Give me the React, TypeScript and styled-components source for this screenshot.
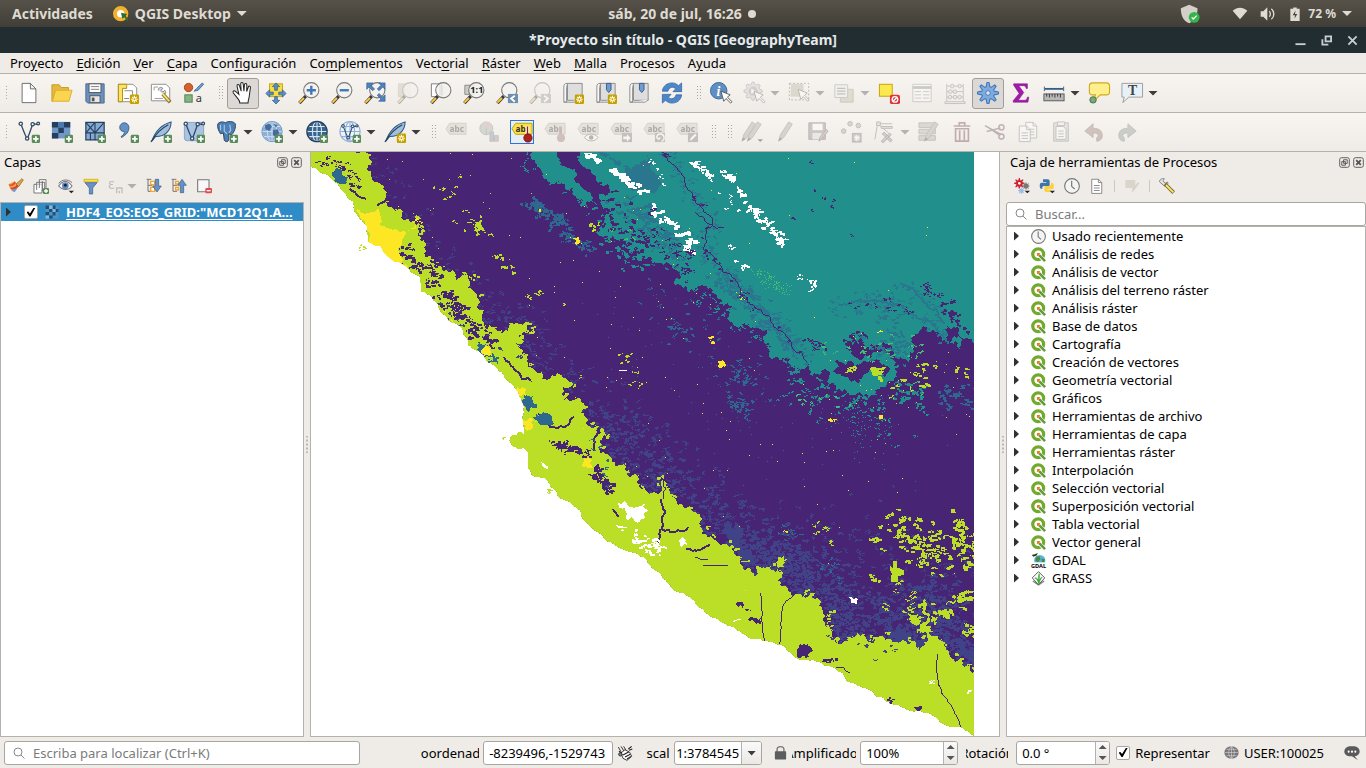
import React from "react";
import styled, { createGlobalStyle, css } from "styled-components";

const FONT = '"Noto Sans", "Open Sans", sans-serif';

const GlobalStyle = createGlobalStyle`
  * { box-sizing: border-box; }
  body { margin: 0; font-family: ${FONT}; font-size: 13px; line-height: 18px; color: #000; background: #efebe7; }
  button, input, select { font: inherit; color: inherit; margin: 0; }
  button { border: 0; padding: 0; background: none; }
  ul { list-style: none; margin: 0; padding: 0; }
`;

/* ---------- map drawing ---------- */

type Pt = [number, number];

const random = (seed: number) => () => {
  seed = (seed + 0x6d2b79f5) | 0;
  let t = Math.imul(seed ^ (seed >>> 15), 1 | seed);
  t = (t + Math.imul(t ^ (t >>> 7), 61 | t)) ^ t;
  return ((t ^ (t >>> 14)) >>> 0) / 4294967296;
};

const parse = (s: string): Pt[] => s.trim().split(/\s+/).map((p) => p.split(",").map(Number) as Pt);

/* Fractal line: every segment is split at a displaced midpoint until it is short. */
function rough(points: Pt[], amp: number, seed: number): Pt[] {
  const r = random(seed);
  const out: Pt[] = [];
  const split = (a: Pt, b: Pt) => {
    const dx = b[0] - a[0];
    const dy = b[1] - a[1];
    if (Math.hypot(dx, dy) < 3) {
      out.push([Math.round(b[0]), Math.round(b[1])]);
      return;
    }
    const k = (r() - 0.5) * amp;
    const m: Pt = [a[0] + dx / 2 - dy * k, a[1] + dy / 2 + dx * k];
    split(a, m);
    split(m, b);
  };
  out.push(points[0]);
  for (let i = 1; i < points.length; i++) split(points[i - 1], points[i]);
  return out;
}

const polygon = (pts: Pt[]) => "M" + pts.map((p) => p.join(" ")).join("L") + "Z";
const blob = (s: string, amp: number, seed: number) => {
  const p = parse(s);
  return polygon(rough([...p, p[0]], amp, seed));
};
const line = (s: string, seed: number, amp = 0.35) => "M" + rough(parse(s), amp, seed).map((p) => p.join(" ")).join("L");

/* Cells strewn around a polyline; cells larger than one pixel come in short wandering chains. */
function strew(s: string | Pt[], spread: number, count: number, size: number, seed: number): string {
  const pts = typeof s === "string" ? parse(s) : s;
  const r = random(seed);
  const chain = size > 1 ? 5 : 1;
  let d = "";
  const lengths = pts.slice(1).map((p, i) => Math.hypot(p[0] - pts[i][0], p[1] - pts[i][1]));
  const total = lengths.reduce((a, b) => a + b, 0);
  for (let n = 0; n < count; n += chain) {
    let t = r() * total;
    let i = 0;
    while (i < lengths.length - 1 && t > lengths[i]) t -= lengths[i++];
    const f = t / (lengths[i] || 1);
    const g = () => (r() + r() + r() - 1.5) * spread * 1.3;
    let x = Math.round(pts[i][0] + (pts[i + 1][0] - pts[i][0]) * f + g());
    let y = Math.round(pts[i][1] + (pts[i + 1][1] - pts[i][1]) * f + g());
    for (let c = 0; c < chain; c++) {
      const w = 1 + Math.floor(r() * size);
      const h = 1 + Math.floor(r() * Math.max(1, size - 1));
      d += `M${x} ${y}h${w}v${h}h-${w}z`;
      x += Math.round((r() - 0.45) * 4);
      y += Math.round((r() - 0.45) * 3);
    }
  }
  return d;
}

const coast = rough(
  parse(`311,168 325,175 333,182 342,192 353,203 357,217 367,228 368,243 380,247 387,257 405,267 420,278 421,293
  438,305 445,317 462,330 468,347 487,363 505,380 518,393 524,413 524,434 511,437 512,447 522,447 528,457 532,477 538,478 548,483
  557,493 558,498 580,512 590,528 603,538 627,552 643,558 650,567 660,575 670,586 687,597 698,608 713,619 740,632
  767,642 785,648 798,660 817,663 843,675 847,683 877,698 890,705 920,712 935,718 940,724 960,728 972,736`),
  0.25,
  3,
);
const inner = rough(
  parse(`350,153 372,163 371,178 380,185 387,193 393,210 405,222 420,225 426,243 432,263 448,273 467,275 465,290 477,297 482,317
  493,330 508,332 530,325 518,337 520,350 528,360 545,380 572,383 563,397 585,407 588,427 610,435 600,441 605,455 627,473 658,495
  663,475 670,493 683,508 700,523 713,540 737,557 740,565 775,573 783,557 778,582 810,595 823,620 848,642 857,633 867,643 880,637
  920,652 928,642 902,613 923,623 924,600 930,620 942,640 950,657 974,673`),
  0.75,
  8,
);
const landPath = polygon([...coast, [974, 737], [974, 153], [311, 153]]);
const greenPath = polygon([...coast, [974, 737], ...[...inner].reverse(), [311, 153]]);
const shifted = (dx: number, dy: number) => inner.map((p) => [p[0] + dx, p[1] + dy] as Pt);
const lowerInner = inner.filter((p) => p[0] > 590).map((p) => [p[0] + 10, p[1] - 14] as Pt);

const tealLobe = "532,153 537,165 542,173 547,180 560,183 582,200 588,212 589,193 580,185 575,173 566,168 560,160 557,153";
const tealEdge = `580,153 598,177 605,197 602,213 612,237 625,250 638,262 656,264 680,273 688,293 700,287 718,300 732,307
730,323 767,332 763,343 790,360 813,377 840,390 860,393 887,383 897,378 893,360 873,353 853,357 838,353 850,347 887,345 920,360
914,345 923,327 940,340 960,350 947,326 960,338 974,347`;
const river = "662,153 676,168 684,178 690,192 703,212 713,222 706,232 703,250 714,260 723,273 740,293 757,310 770,318 783,333 793,350 807,363";

const purple = "#482475";
const indigo = "#404387";
const blue = "#2f688e";
const slate = "#2a768e";
const teal = "#21908d";
const lime = "#bbdf27";
const yellow = "#fde725";
const mint = "#43bf71";

type Layer = { fill?: string; stroke?: string; width?: number; d: string };
const layers: Layer[] = [
  { fill: purple, d: landPath },
  { fill: indigo, d: strew(shifted(8, -4), 14, 1500, 2, 11) },
  { fill: indigo, d: strew(lowerInner, 26, 3400, 3, 12) },
  { fill: indigo, d: strew("730,545 760,560 800,590 850,625 890,625 935,645 974,660", 28, 2800, 3, 13) },
  { fill: indigo, d: strew("800,530 850,550 900,590 965,590", 42, 900, 2, 14) },
  { fill: indigo, d: strew("480,300 530,345 600,410 660,460 730,520", 22, 1100, 2, 15) },
  { fill: indigo, d: blob("722,522 742,530 752,552 762,566 745,563 725,548", 0.9, 16) },
  { fill: indigo, d: blob("880,625 905,633 926,642 920,651 892,640", 0.9, 17) },
  { fill: indigo, d: blob("944,637 965,648 974,655 974,673 958,660", 0.9, 18) },
  { fill: blue, d: strew("528,202 543,212 560,225 573,240 588,252", 6, 420, 3, 20) },
  { fill: blue, d: strew("672,325 688,335", 7, 90, 2, 21) + strew("735,370 752,382", 7, 110, 2, 22) + strew("735,400 745,412", 8, 140, 2, 23) },
  { fill: blue, d: strew("645,285 690,315 740,360 760,420", 26, 240, 2, 24) + strew("945,385 965,400", 12, 200, 3, 25) },
  { fill: blue, d: strew("630,310 700,400 900,410", 60, 140, 1, 26) + strew("785,530 792,542", 6, 50, 2, 27) + strew("825,563 840,577", 7, 50, 2, 28) },
  { fill: teal, d: blob(tealLobe, 0.8, 30) },
  { fill: teal, d: polygon([...rough(parse(tealEdge), 0.9, 31), [974, 153]]) },
  { fill: teal, d: strew("525,153 545,175 590,205", 8, 150, 2, 32) + strew("605,200 615,235 635,265", 12, 420, 3, 33) },
  { fill: teal, d: strew("780,350 830,390 870,395 930,395", 11, 420, 3, 34) + strew("780,400 850,405 880,420 895,435", 14, 260, 2, 35) },
  { fill: teal, d: strew("845,415 880,430 860,447", 18, 90, 1, 36) + strew("690,290 760,340 800,370", 7, 240, 2, 37) },
  { fill: purple, d: strew("606,200 618,225 634,240 650,247", 13, 330, 3, 40) + strew("650,235 668,250 688,270", 8, 240, 2, 41) },
  { fill: purple, d: strew("850,340 860,345", 6, 90, 3, 42) + strew("805,342 820,350", 5, 60, 2, 43) + strew("920,285 940,297", 4, 60, 2, 44) + strew("945,305 960,325 970,335", 6, 100, 3, 45) },
  { fill: purple, d: blob("832,372 850,362 870,362 890,370 885,378 858,384", 0.9, 46) + blob("923,345 935,337 950,348 974,352 974,370 900,365", 0.9, 47) },
  { fill: slate, d: blob("598,153 648,153 650,170 658,188 645,190 625,173", 0.8, 48) + strew(river, 8, 900, 2, 49) },
  { fill: slate, d: strew("716,275 760,312 790,345", 8, 650, 3, 50) + strew("830,310 870,300 910,310 945,335", 10, 330, 2, 51) + strew("880,290 905,290 950,315", 6, 110, 2, 52) },
  { fill: slate, d: strew("888,310 895,340 905,350 870,350", 10, 260, 3, 53) + strew("620,205 650,225 680,262", 11, 400, 3, 54) },
  { stroke: slate, width: 2, d: line("838,305 870,302 900,306 930,322 948,345", 55) + line("900,284 922,300 945,325", 56) },
  { stroke: purple, width: 1, d: line(river, 57) + line("695,213 712,226 724,228", 58) },
  { fill: purple, d: strew(river, 2, 120, 2, 59) + strew("785,170 805,200 835,215 850,250", 22, 40, 2, 60) + strew("848,302 880,303 910,310", 6, 60, 2, 61) },
  { fill: mint, d: strew("755,272 770,282 788,293", 5, 90, 1, 62) + strew("615,230 627,236", 5, 20, 2, 63) + strew("815,345 850,357 900,345 925,350", 7, 120, 2, 64) + strew("780,398 820,405 910,395 930,385", 10, 60, 2, 65) },
  { fill: "#fff", d: strew("688,160 703,170 711,177", 2, 70, 3, 70) + strew("714,169 725,174 736,181", 1, 60, 3, 71) + strew("738,190 748,207 762,220 778,238 784,248", 2, 230, 3, 72) },
  { fill: "#fff", d: strew("584,153 596,160", 2, 40, 4, 73) + strew("612,170 630,183 642,192", 3, 110, 4, 74) + strew("650,205 658,216 672,224", 3, 60, 4, 75) + strew("672,230 690,240 690,252", 5, 90, 4, 76) },
  { fill: "#fff", d: strew("729,246 740,250", 1, 10, 3, 77) + strew("736,260 746,265", 3, 16, 3, 78) + strew("812,285 815,285", 4, 20, 3, 79) + strew("710,180 720,195 732,210", 5, 35, 2, 80) + strew("650,158 668,195", 7, 24, 2, 81) + strew("800,258 806,300", 6, 12, 2, 82) },
  { fill: purple, d: strew("686,250 692,254", 3, 30, 2, 83) + strew("649,208 652,214", 3, 20, 2, 84) },
  { fill: lime, d: greenPath },
  { fill: lime, d: strew(inner, 5, 800, 3, 90) },
  { fill: lime, d: strew("432,180 450,190 460,205", 9, 45, 2, 91) + strew("455,222 480,226 485,230", 8, 45, 2, 92) + blob("478,215 482,222 492,233 494,238 484,232", 0.9, 93) + strew("500,252 508,272", 5, 34, 3, 94) + strew("586,220 596,229", 1, 14, 3, 95) },
  { fill: lime, d: strew("530,290 540,305 570,310", 8, 30, 2, 96) + strew("595,350 640,365 635,380", 16, 46, 2, 97) + strew("390,160 520,230", 50, 30, 1, 98) },
  { fill: lime, d: strew("843,372 852,369", 2, 18, 3, 99) + strew("872,368 882,379", 3, 60, 4, 100) + strew("912,366 935,366", 3, 30, 3, 101) + strew("890,388 912,380 925,380", 6, 60, 3, 102) + strew("950,369 968,371", 3, 20, 3, 103) },
  { fill: lime, d: strew("895,530 930,545 974,550", 20, 420, 3, 104) + strew("905,540 935,560", 12, 140, 3, 105) + strew("955,520 974,565", 10, 150, 4, 106) + blob("890,567 893,569 893,562 897,562 897,569 904,572 904,576 898,577 898,583 891,583", 0.2, 107) },
  { fill: lime, d: strew("950,600 974,590", 6, 100, 4, 108) + strew("938,612 950,613", 3, 60, 4, 109) + strew("960,632 974,628", 6, 60, 3, 110) + strew("897,585 912,600 910,612", 8, 60, 2, 111) },
  { fill: lime, d: strew("800,523 835,540", 9, 45, 2, 112) + strew("868,537 878,541", 3, 20, 3, 113) + strew("869,575 876,585", 3, 24, 3, 114) + strew("880,603 886,610", 2, 14, 2, 115) + strew("860,380 974,420", 40, 26, 1, 116) },
  { fill: indigo, d: strew("425,300 455,315 480,340 535,360", 9, 160, 2, 120) + strew("830,635 900,655", 9, 90, 2, 121) },
  { fill: purple, d: strew("320,162 345,170 360,185", 6, 150, 2, 122) + strew("400,250 415,262 432,278 438,293", 7, 240, 3, 123) + strew("443,295 455,312 465,320", 6, 200, 3, 124) + strew("470,325 492,345", 7, 120, 3, 125) },
  { stroke: purple, width: 2, d: line("504,358 516,372 532,382", 126) + line("350,190 358,197 366,200", 127) + line("377,207 386,201 394,204", 128) + line("538,415 550,428 565,428 574,418", 129) },
  { fill: purple, d: strew("553,443 570,448 585,454", 3, 150, 3, 130) + strew("592,470 603,480 608,495", 5, 190, 3, 131) + strew("555,444 568,450", 4, 30, 2, 132) },
  { stroke: purple, width: 2, d: line("593,452 594,440 600,432", 133) + line("613,510 619,518", 134) + line("661,500 663,525 660,531 657,545", 135) + line("662,531 675,533 688,528", 136) + line("686,550 700,551 710,546", 137) },
  { stroke: purple, width: 1, d: line("663,480 663,500", 138) + line("703,566 728,566", 139, 0) + line("760,594 761,620 765,642", 140, 0.15) + line("795,595 784,605 780,625 779,645", 141, 0.15) + line("695,558 708,560", 142) + line("937,655 938,685 950,705 960,728", 143, 0.15) + line("836,668 850,674", 144) },
  { fill: purple, d: blob("797,650 800,645 808,644 813,652 806,660 797,658", 0.8, 145) + blob("736,606 744,606 752,612 743,610", 0.8, 146) + blob("748,621 761,619 761,626", 0.8, 147) + strew("824,660 832,662", 3, 24, 3, 148) + strew("912,708 921,709", 2, 16, 3, 149) + strew("889,700 891,703", 2, 10, 3, 150) },
  { fill: blue, d: blob("335,170 342,172 347,184 338,184", 0.9, 151) + blob("476,347 486,345 489,356 480,358", 0.9, 152) + blob("521,402 533,397 537,408 527,412", 0.8, 153) + blob("536,415 545,414 549,426 540,426", 0.9, 154) + strew("485,361 497,358", 2, 30, 3, 155) + strew("590,440 607,490", 6, 35, 2, 156) },
  { fill: yellow, d: blob("357,210 368,214 379,210 380,226 393,231 406,233 418,222 416,229 402,240 398,251 402,265 408,268 387,258 380,248 368,243 367,228", 0.4, 160) },
  { fill: yellow, d: blob("483,349 491,349 492,357 484,358", 0.9, 161) + blob("517,386 524,389 526,398 519,397", 0.9, 162) + blob("524,421 532,419 533,428 525,430", 0.9, 163) + blob("583,459 592,461 593,469 587,469", 0.8, 164) },
  { fill: yellow, d: blob("572,239 579,238 582,245 576,246", 0.7, 165) + blob("718,362 723,361 725,368 719,369", 0.4, 166) + blob("539,210 541,210 541,213 539,213", 0, 167) + strew("708,340 712,343", 2, 8, 3, 168) + strew("826,420 834,420", 1, 10, 3, 169) + blob("879,416 883,416 883,420 879,420", 0, 170) + strew("876,330 879,334", 1, 5, 2, 171) + strew("783,533 787,537", 1, 5, 2, 172) },
  { fill: yellow, d: strew("311,160 500,200 740,300 974,410", 130, 110, 1, 173) + strew("560,300 640,400 900,500", 80, 60, 1, 174) + strew("415,218 419,228", 2, 14, 2, 175) + strew("444,310 450,320", 2, 10, 2, 176) + strew("736,290 745,305", 3, 8, 1, 177) },
  { fill: "#fff", d: blob("617,503 625,502 630,508 645,505 648,512 643,520 637,524 627,521", 0.7, 180) + strew("632,508 640,518", 5, 50, 3, 191) + strew("632,535 644,548 657,545", 6, 100, 3, 181) + strew("655,540 659,552", 3, 40, 3, 182) + blob("678,542 686,541 687,547 680,547", 0.8, 183) + strew("615,528 622,530", 4, 20, 2, 184) },
  { fill: "#fff", d: blob("848,598 852,598 853,600 858,600 857,605 851,604", 0.4, 185) + blob("541,463 548,467 547,470 542,467", 0.5, 186) + strew("929,678 931,683", 2, 14, 2, 187) + strew("734,618 735,622", 2, 8, 2, 188) + strew("967,692 969,696", 2, 8, 2, 189) + blob("619,371 627,371 627,372 619,372", 0, 190) },
];
const islets = strew("359,243 365,248", 1, 10, 2, 200) + blob("511,437 523,434 525,447 513,448", 0.6, 201) + strew("503,440 504,441", 1, 5, 2, 202) + strew("546,487 550,491", 1, 8, 2, 203);

const MapCanvas = () => (
  <MapSvg viewBox="311 153 688 584" preserveAspectRatio="xMinYMin meet" shapeRendering="crispEdges" role="img" aria-label="Mapa">
    <clipPath id="land">
      <path d={landPath} />
    </clipPath>
    <g clipPath="url(#land)">
      {layers.map((l, i) => (
        <path key={i} d={l.d} fill={l.fill ?? "none"} stroke={l.stroke} strokeWidth={l.width} />
      ))}
    </g>
    <path d={islets} fill={lime} />
  </MapSvg>
);

/* ---------- icons, each drawn on a 24 x 24 grid ---------- */

const Plus = () => (
  <g>
    <rect x="15" y="15" width="9" height="9" rx="1.5" fill="#5a8c5a" />
    <path d="M19.5 16.5v6M16.5 19.5h6" stroke="#fff" strokeWidth="2" />
  </g>
);
const Star = () => (
  <g>
    <rect x="14" y="13.5" width="10" height="10.5" rx="1.5" fill="#c4a000" />
    <path d="M19 15v7.500M15.300 18.800h7.400M16.500 16.300l5 5M21.500 16.300l-5 5" stroke="#fffbe0" strokeWidth="1.300" />
    <circle cx="19" cy="18.800" r="1" fill="#c4a000" />
  </g>
);
const Lens = ({ children, back }: { children?: React.ReactNode; back?: React.ReactNode }) => (
  <g>
    {back}
    <path d="M1.500 23L8.500 15.500" stroke="#3a3a3a" strokeWidth="3.500" />
    <path d="M1.500 22.500L6.500 17.500" stroke="#fcc83c" strokeWidth="2.200" />
    <circle cx="14.500" cy="9" r="8.300" fill="#f2f2ef" fillOpacity=".85" stroke="#777" strokeWidth="1.200" />
    {children}
  </g>
);
const Cursor = ({ x = 12, y = 10 }: { x?: number; y?: number }) => (
  <path transform={`translate(${x} ${y})`} d="M0 0l3 11 2.500-3 5 5 1.500-1.500-5-5 3-2.500z" fill="#fff" stroke="#555" strokeWidth="1" />
);
const Tag = ({ abc = "abc", lit = false }: { abc?: string; lit?: boolean }) => (
  <g>
    <path d="M1 8.500l4-6h18v12H5z" fill={lit ? "#fbe14b" : "#cfc9ae"} stroke={lit ? "#b99c00" : "#999"} />
    <text x="5" y="12" fontSize="9" fontWeight="700" fill="#333">{abc}</text>
  </g>
);
const Page = ({ x = 0, y = 0 }: { x?: number; y?: number }) => (
  <g transform={`translate(${x} ${y})`}>
    <path d="M.5.5h8l4 4v13H.5z" fill="#fff" stroke="#777" />
    <path d="M8.500.5v4h4M3 8h7M3 11h7M3 14h7" fill="none" stroke="#777" />
  </g>
);
const Globe = ({ fill, line: l }: { fill: string; line: string }) => (
  <g fill="none" stroke={l} strokeWidth="1.200">
    <circle cx="12" cy="11.500" r="11" fill={fill} />
    <ellipse cx="12" cy="11.500" rx="5" ry="11" />
    <path d="M12 .5v22M1 11.500h22M3 6h18M3 17h18" />
  </g>
);
const Feather = () => (
  <g>
    <path d="M2 22C5 13 12 4 23 1c0 5-1 8-5 12-3 3-7 4-12 4z" fill="#a3bfdf" stroke="#28557f" strokeWidth="1.100" />
    <path d="M1 23C6 14 12 8 20 4" fill="none" stroke="#234260" strokeWidth="1.300" />
  </g>
);
const VNodes = () => (
  <g fill="#fff" stroke="#2f4a66" strokeWidth="1.400">
    <path d="M3 3c1 2 5 14 7 16 2-3 5-13 6-15.500 2-1 4 1 6-.5" fill="none" />
    <circle cx="3" cy="3" r="1.800" /><circle cx="16" cy="3.500" r="1.800" /><circle cx="22" cy="2.800" r="1.500" /><circle cx="10" cy="19" r="1.800" />
  </g>
);
const Pencil = ({ x = 0 }: { x?: number }) => (
  <g transform={`translate(${x} 0)`}>
    <path d="M3 22l2-7L14 1l4 2.500L8.500 18z" fill="#aaa58f" stroke="#777" />
    <path d="M3 22l1-4 3 1.500z" fill="#444" />
  </g>
);
const gearTeeth = (cx: number, cy: number, r1: number, r2: number, n: number) => {
  let d = "";
  for (let i = 0; i < n * 4; i++) {
    const a = ((i - 0.5) / (n * 4)) * Math.PI * 2;
    const r = i % 4 < 2 ? r2 : r1;
    d += `${i ? "L" : "M"}${cx + Math.sin(a) * r} ${cy - Math.cos(a) * r}`;
  }
  return d + "Z";
};
const Roll = ({ mark, star }: { mark?: boolean; star?: boolean }) => (
  <g>
    <path d="M6 1.500h16V20H6z" fill="#dedede" stroke="#888" />
    <path d="M6 1.500c-3 0-4 1-4 4V22h3V6c0-2 1-2 1-4.500zM2 22h17l3-3" fill="#f7f7f7" stroke="#888" />
    {mark && <path d="M12.500 1.500h5v7l-2.500 3-2.500-3z" fill="#6f9bd0" stroke="#345c88" />}
    {star && <Star />}
  </g>
);

const icons: Record<string, React.ReactNode> = {
  new: <path d="M4.500 1.500h9l6 6v15h-15zM13.500 1.500v6h6" fill="#fff" stroke="#666" />,
  open: <g><path d="M1 3h8l2 3h8v4H5L2 21H1z" fill="#e5b93c" stroke="#c49a1c" /><path d="M5 9h18l-3.500 12H1.500z" fill="#fbd450" stroke="#d9ad2b" /></g>,
  save: <g><path d="M2 2h20v21H4l-2-2z" fill="#6991c0" stroke="#49698f" /><rect x="5.500" y="2" width="13" height="9.500" fill="#fff" stroke="#555" /><path d="M7.500 5h9M7.500 8h9" stroke="#777" /><rect x="6.500" y="15" width="11" height="7.500" fill="#e8e8e8" stroke="#555" /><rect x="8.500" y="17" width="3" height="4" fill="#555" /></g>,
  layoutNew: <g><path d="M1.500 2.500h16l4 4v15h-20z" fill="#fff" stroke="#888" /><path d="M1.500 2.500h9v4.500h-4.500v14.500h-4.500z" fill="#fbe26a" stroke="#b08c00" /><path d="M8 9.500h9V15M13 18H8z" fill="none" stroke="#888" /><Star /></g>,
  layouts: <g><path d="M1.500 2.500h16l4 4v14h-20z" fill="#fff" stroke="#888" /><path d="M4.500 9V5.500H9M5 18h9" fill="none" stroke="#999" /><path d="M9 9c0-3 3-4 5-2l-2 2 2 2 2-2c2 2 1 4-1 5" fill="#d6d9dc" stroke="#777" /><path d="M14 13l8 9" stroke="#8a7437" strokeWidth="4" /><path d="M14 13l7 8" stroke="#fbe26a" strokeWidth="2" /></g>,
  style: <g><circle cx="6" cy="6" r="4.500" fill="#d5612f" stroke="#a53c12" /><rect x="2" y="14" width="8" height="8" fill="#85b585" stroke="#4c7c4c" /><path d="M12 10l3-3 6-6 1.500 1.500-6 6.500z" fill="#6f9bd0" stroke="#446d9c" /><text x="14" y="22" fontSize="12" fill="#333">a</text></g>,
  hand: <path d="M8.500 23c0-3-1.500-4-3-6L1.500 12c-1.300-2 .8-3.300 2.400-1.800L7.500 13.500 5.500 4.500c-.4-2 2-2.500 2.600-.6L10 10 9.500 2c0-2 2.600-2 2.700 0L13 10l.6-7c.2-2 2.600-1.800 2.600.2L16 10.500l1.800-5c.7-1.800 2.700-1 2.300.8L19 14c0 4-1.500 5-1.500 9z" fill="#fff" stroke="#222" strokeWidth="1.100" />,
  panSel: <g><rect x="5" y="2" width="14" height="14" fill="#f9dd3e" stroke="#c4a000" /><path d="M12 1l4 4h-2.500v4h-3V5H8zM12 24l4-4h-2.500v-4h-3v4H8zM1 12.500l4-4V11h4v3H5v2.500zM23 12.500l-4-4V11h-4v3h4v2.500z" fill="#5d8cc4" stroke="#2e5f97" strokeWidth=".8" /></g>,
  zoomIn: <Lens><path d="M14.500 4v10M9.500 9h10" stroke="#3f78b5" strokeWidth="2.600" /></Lens>,
  zoomOut: <Lens><path d="M9.500 9h10" stroke="#3f78b5" strokeWidth="2.600" /></Lens>,
  zoomFull: <Lens><path d="M3 1h7L7.500 3.500l4 4-2 2-4-4L3 8zM23 1h-7l2.500 2.500-4 4 2 2 4-4L23 8zM23 21v-7l-2.500 2.500-4-4-2 2 4 4L16 21z" fill="#4f81bb" stroke="#2e5f97" strokeWidth=".7" /></Lens>,
  zoomSel: <Lens back={<path d="M1.500 2h13v14h-13z" fill="#c9c194" stroke="#aaa" />} />,
  zoomLayer: <Lens back={<path d="M1.500 2h11v14h-11z" fill="#fff" stroke="#777" />}><path d="M10 4v10h4.500V4" fill="#ddd" fillOpacity=".6" /></Lens>,
  zoomNative: <Lens back={<path d="M2 3.500h10v10H2z" fill="#ccc" stroke="#888" />}><text x="8" y="12.500" fontSize="10" fontWeight="700" fill="#222">1:1</text></Lens>,
  zoomLast: <Lens><rect x="13" y="13" width="11" height="10" fill="#6f8fae" /><path d="M20.500 15l-4 3 4 3.500" fill="none" stroke="#fff" strokeWidth="2" /></Lens>,
  zoomNext: <Lens><rect x="13" y="13" width="11" height="10" fill="#999" /><path d="M16.500 15l4 3-4 3.500" fill="none" stroke="#fff" strokeWidth="2" /></Lens>,
  mapNew: <Roll star />,
  markNew: <Roll mark star />,
  marks: <Roll mark />,
  refresh: <path d="M1.500 10C2 4 7 1 12 1c3 0 5 1 7 3l3.500-3v9.500h-9.500l3-3c-3-3-7-2-8.500 2.500zM22.500 14c-.5 6-5.500 9-10.500 9-3 0-5-1-7-3l-3.500 3v-9.500h9.500l-3 3c3 3 7 2 8.500-2.500z" fill="#4d87c7" stroke="#2d62a0" strokeWidth=".8" />,
  info: <g><circle cx="9.500" cy="9.500" r="9" fill="#5f8fc2" stroke="#3a679b" /><text x="7" y="15" fontSize="15" fontWeight="700" fontStyle="italic" fill="#fff" fontFamily="Liberation Serif">i</text><Cursor /></g>,
  action: <g><path d={gearTeeth(11, 10, 7.5, 10, 8)} fill="#ccc" stroke="#888" /><circle cx="11" cy="10" r="5" fill="#999" /><path d="M9 7l5 3-5 3z" fill="#fff" /><Cursor /></g>,
  select: <g><path d="M1.500 1.500h21v18h-21z" fill="none" stroke="#555" strokeDasharray="2 2" /><path d="M3 2h14v14H3z" fill="#b9b28e" /><Cursor x={11} y={8} /></g>,
  form: <g><path d="M10 8h12v14H8V8z" fill="#c5bd8d" stroke="#888" /><path d="M2 3h14v14H2z" fill="#eee" stroke="#888" /><path d="M4.500 7h9M4.500 10h9M4.500 13h9" stroke="#777" strokeWidth="1.500" /></g>,
  deselect: <g><rect x="1.500" y="2.500" width="14" height="13" fill="#fce94f" stroke="#c4a000" /><rect x="13" y="14" width="11" height="10" rx="2" fill="#e03535" /><circle cx="18.500" cy="19" r="3" fill="none" stroke="#fff" strokeWidth="1.500" /><path d="M16.500 21l4-4" stroke="#fff" strokeWidth="1.500" /></g>,
  table: <g><path d="M2 2.500h20v19H2z" fill="#fff" stroke="#888" /><path d="M2 6h20" stroke="#888" strokeWidth="3" /><path d="M4 10.500h7M4 14h7M4 17.500h7M13 10.500h7M13 14h7M13 17.500h7" stroke="#888" /></g>,
  abacus: <g fill="none" stroke="#777"><path d="M3 2v19M21 2v19M1 21.500h22v2H1zM3 4.500h18M3 10.500h18M3 16.500h18" /><g fill="#e9d9d9"><circle cx="9" cy="4.500" r="2" /><circle cx="17" cy="4.500" r="2" /><circle cx="7" cy="10.500" r="2" /><circle cx="12" cy="10.500" r="2" /><circle cx="6.500" cy="16.500" r="2" /><circle cx="12" cy="16.500" r="2" /><circle cx="17" cy="16.500" r="2" /></g></g>,
  gear: <g><path d={gearTeeth(12, 12, 7, 11.5, 8)} fill="#80aadd" stroke="#3c78bd" strokeWidth="1.200" strokeLinejoin="round" /><circle cx="12" cy="12" r="2.500" fill="#e0e6ee" stroke="#3c78bd" /></g>,
  sigma: <path d="M4 2h15v5h-1.500c0-2-1-3-3-3H9.500l5.500 7.500L9 20h6.500c2 0 3-1 3.500-3.500h1.500L19.500 22H3.500v-1.500l6.500-8L4 3.500z" fill="#a31bab" stroke="#7d0f86" strokeWidth=".6" />,
  measure: <g><path d="M2 7.500h20" stroke="#365c88" strokeWidth="2" /><path d="M1.500 5v5M22.500 5v5" stroke="#365c88" /><rect x="1" y="13" width="22" height="7.500" fill="#b8b8b8" stroke="#555" /><path d="M4 13v3M7 13v4M10 13v3M13 13v4M16 13v3M19 13v4" stroke="#333" /></g>,
  tip: <g><path d="M5 1h15c2 0 3.500 1.500 3.500 3.500v6c0 2-1.500 3.500-3.500 3.500h-6.500L7 20l1-6H5c-2 0-3.500-1.500-3.500-3.500v-6C1.500 2.500 3 1 5 1z" fill="#fdf08c" stroke="#cfa91c" strokeWidth="1.200" /><circle cx="5.500" cy="19.500" r="3.500" fill="#77a877" stroke="#47704a" /></g>,
  note: <g><path d="M1 1.500h22.500v15H8.500L2 22.500l1.500-6H1z" fill="#e7f1f8" stroke="#999" /><text x="7.500" y="14" fontSize="15" fontWeight="700" fontFamily="Liberation Serif" fill="#444">T</text></g>,
  vector: <g><VNodes /><Plus /></g>,
  raster: <g><path d="M1 1h20v18H1z" fill="#6f98c9" /><path d="M1 1h7v6H1zM14 1h7v6h-7zM8 7h6v6H8zM1 13h7v6H1z" fill="#263f5e" /><path d="M8 1h6v6H8z" fill="#4a79ad" /><Plus /></g>,
  mesh: <g><path d="M2 1.500h20v19H2z" fill="#87aad3" stroke="#24405f" strokeWidth="1.300" /><path d="M2 13h20M12 1.500V21M2 1.500L12 13M12 1.500L2 13M12 13L22 1.500M7 13v8" fill="none" stroke="#24405f" strokeWidth="1.200" /><Plus /></g>,
  comma: <g><path d="M3 7a5 5 0 1 1 10 0c0 5-3 8-8 11l-.5-1c3-2 4-4 3.500-5.500C5 11.500 3 10 3 7z" fill="#6491c5" stroke="#365c88" /><Plus /></g>,
  feather: <g><Feather /><Plus /></g>,
  virtual: <g><rect x="1.500" y="1.500" width="21" height="20" rx="3" fill="#a9c4e1" stroke="#85a1c2" /><VNodes /><Plus /></g>,
  postgis: <g><path d="M2 3c3-3 7-2 8-1 3-2 9-2 11 1 1 4-1 9-4 12l-3-1v7c-1 2-4 2-5 0l-1-8-3 1C3 11 1 7 2 3z" fill="#4d7fb5" stroke="#24405f" /><path d="M9 4v7l3 3M15 4l1 6-2 3M5 4v6" fill="none" stroke="#a9c8ea" strokeWidth="1.200" /><Plus /></g>,
  wms: <g><Globe fill="#8dafd8" line="#c9daee" /><path d="M4 5l5-2 3 3-3 5-4-2zM13 10l5-1 2 4-4 5-3-3zM14 3l4 2-2 2z" fill="#466d97" /><circle cx="12" cy="11.500" r="11" fill="none" stroke="#6e94c2" /><Plus /></g>,
  wcs: <g><Globe fill="#38648f" line="#d6e3f1" /><circle cx="12" cy="11.500" r="11" fill="none" stroke="#24405f" strokeWidth="1.500" /><Plus /></g>,
  wfs: <g><Globe fill="#eef3fa" line="#8fb0d8" /><g transform="translate(2 3) scale(.8)"><VNodes /></g><Plus /></g>,
  featherNew: <g><Feather /><Star /></g>,
  tag: <Tag />,
  pie: <g><circle cx="9" cy="8" r="7" fill="#9db59d" stroke="#777" /><path d="M9 8L3 4.500A7 7 0 0 1 15 4.500z" fill="#c99" /><path d="M9 8v7" stroke="#777" /><rect x="13" y="12" width="4" height="10" fill="#6b93c0" stroke="#777" /><rect x="18" y="16" width="4" height="6" fill="#a99" stroke="#777" /></g>,
  tagPin: <g><Tag abc="ab" lit /><path d="M18 6v10" stroke="#fff" strokeWidth="4" /><path d="M18 6v10" stroke="#8f1d1d" strokeWidth="1.500" /><circle cx="18.500" cy="18.500" r="4.500" fill="#b02020" stroke="#7d1212" /></g>,
  tagPinOff: <g><Tag abc="ab" /><path d="M18 6v10" stroke="#a55" strokeWidth="3" /><circle cx="18.500" cy="18.500" r="4.500" fill="#b07070" /></g>,
  tagEye: <g><Tag /><path d="M8 18c4-5 11-5 15 0-4 5-11 5-15 0z" fill="#fff" stroke="#555" /><circle cx="15.500" cy="18" r="2.500" fill="#555" /></g>,
  tagMove: <g><Tag /><rect x="13" y="13" width="11" height="10" fill="#777" /><path d="M14.500 17h4v-2.500l4 4-4 4V20h-4z" fill="#fff" /></g>,
  tagTurn: <g><Tag /><rect x="13" y="13" width="11" height="10" fill="#777" /><path d="M20 22a4 4 0 1 0-5-4l2 2 2-2" fill="none" stroke="#fff" strokeWidth="1.500" /></g>,
  tagEdit: <g><Tag /><rect x="13" y="13" width="11" height="10" fill="#777" /><path d="M15 21.500l1-3 5-4.500 1.500 1.500-5 5z" fill="#fff" /></g>,
  pencils: <g><Pencil x={-2} /><Pencil x={4} /><path d="M18 20h6l-3 3z" fill="#222" /></g>,
  pencil: <Pencil x={2} />,
  saveEdit: <g><path d="M2 2h18v18H2z" fill="#888" stroke="#555" /><rect x="6" y="3" width="11" height="7" fill="#fff" /><rect x="6" y="13" width="10" height="7" fill="#ddd" /><path d="M13 22l1-4 7-9 2 2-7 9z" fill="#b88" stroke="#755" /></g>,
  points: <g fill="#aaa" stroke="#666"><circle cx="4" cy="11" r="2.500" /><circle cx="11" cy="3" r="2.500" /><circle cx="20" cy="5" r="2.500" /><rect x="13.500" y="13.500" width="9.500" height="9.500" fill="#888" /><path d="M18.200 15v7M15 18.200h7M16 16l5 5M21 16l-5 5" stroke="#fff" strokeWidth="1.200" /></g>,
  vertex: <g fill="#ccc" stroke="#666"><path d="M5 3h16M5 3L2 20M5 3l12 10" fill="none" /><path d="M4 1h4v4H4zM9 6h12v2H9z" /><path d="M9 22l9-9 2 2-9 9zM12 12l9 9-2 2-9-9z" fill="#999" /></g>,
  attrs: <g><path d="M1 2h18v5H1zM1 9h18v5H1zM1 16h18v5H1z" fill="#b9b28e" stroke="#777" /><Pencil x={4} /></g>,
  trash: <g fill="none" stroke="#8b3a4a" strokeWidth="1.800"><path d="M3 5.500h18M9 5V2h6v3M5 8.500h14V22H5zM9.500 10v11M14.500 10v11" /></g>,
  cut: <g fill="none" stroke="#7c4a54" strokeWidth="1.600"><path d="M1 5l18 10M3 11.500L18 7.500M3 6l13 9" /><circle cx="19" cy="7" r="2.800" /><circle cx="19" cy="17" r="2.800" /></g>,
  copy: <g><Page x={9} y={1} /><Page x={2} y={5} /></g>,
  paste: <g><path d="M4 2h16v20H4z" fill="#ccc" stroke="#777" /><path d="M8 1h8v4H8z" fill="#eee" stroke="#777" /><path d="M6.500 6h8l3 3v11h-11z" fill="#fff" stroke="#777" /><path d="M9 11h6M9 14h6M9 17h6" stroke="#777" /></g>,
  undo: <path d="M2 11l9-8v5c7 0 10 3 10 8 0 4-3 6-6 6v-4c3-1 2-5-4-5v5z" fill="#a4776c" stroke="#8a6258" />,
  redo: <path d="M22 11l-9-8v5C6 8 3 11 3 16c0 4 3 6 6 6v-4c-3-1-2-5 4-5v5z" fill="#83988b" stroke="#6a7f73" />,
  brush: <g><path d="M1 9l9-4 6 7-6 9C5 21 2 15 1 9z" fill="#f2b04a" /><path d="M1 9c3 2 6 0 9-4l2 3C9 12 5 13 2 12z" fill="#e8532e" /><path d="M3 14c4 1 8-1 10-4l3 2c-2 4-6 6-11 5z" fill="#e8392e" /><path d="M5 17c4 0 7-1 10-3l-5 7c-2 0-4-2-5-4z" fill="#6f9bd0" /><path d="M12 9l9-8 2 2-7 10z" fill="#d9a64d" stroke="#8a5d1a" /></g>,
  group: <g><path d="M1.500 9.500h12v13h-12z" fill="#fff" stroke="#666" strokeWidth="1.300" /><path d="M5.500 18V6.500h12V18M9.500 15V2.500h10V16" fill="#fff" fillOpacity=".6" stroke="#666" strokeWidth="1.300" /><path d="M14 20V5" stroke="#666" strokeWidth="1.500" /><Plus /></g>,
  eye: <g><path d="M1 12c6-9 14-9 20 0-5 7-14 7-20 0z" fill="#fff" stroke="#777" strokeWidth="1.600" /><circle cx="11" cy="11.500" r="5" fill="#5d8cc4" /><circle cx="11" cy="11" r="2.200" fill="#223" /><path d="M1 8c5-6 14-7 20-1" fill="none" stroke="#777" strokeWidth="1.500" /><path d="M16 19h8l-4 4z" fill="#222" /></g>,
  filter: <g><path d="M1.500 2h21v4h-21z" fill="#fbe14b" stroke="#c4a000" /><path d="M3 7h18l-6.500 8v9h-5v-9z" fill="#6892c6" stroke="#345c88" /></g>,
  epsilon: <g><text x="0" y="16" fontSize="22" fill="#777">ε</text><path d="M13 23v-8h8v8M17 19v4" fill="none" stroke="#777" strokeWidth="2" /></g>,
  expand: <g><path d="M1 2h7M3 2v18h6M3 11h6" fill="none" stroke="#777" strokeWidth="1.500" /><path d="M7 5h6v5H7zM7 14h6v6H7z" fill="#fff" stroke="#f4a32e" strokeWidth="2" /><path d="M14 2h5v10h4l-6.500 9L10 12h4z" fill="#6892c6" stroke="#345c88" /></g>,
  collapse: <g><path d="M1 2h7M3 2v18h6M3 11h6" fill="none" stroke="#777" strokeWidth="1.500" /><path d="M7 5h4v4H7zM7 14h4v4H7z" fill="#fff" stroke="#f4a32e" strokeWidth="2" /><path d="M14 22h5V11h4L16.500 2 10 11h4z" fill="#6892c6" stroke="#345c88" /></g>,
  remove: <g><path d="M2.500 2.500h17v18h-17z" fill="#f8f8f8" stroke="#777" strokeWidth="1.600" /><rect x="14" y="15" width="10" height="8" rx="2" fill="#e0484d" /><path d="M16 19h6" stroke="#fff" strokeWidth="2" /></g>,
  gears: <g><path d={gearTeeth(8, 8, 5, 8, 8)} fill="#d0202a" /><circle cx="8" cy="8" r="2" fill="#fff" /><path d={gearTeeth(18, 12, 3.5, 5.5, 8)} fill="#777" /><path d={gearTeeth(11, 19, 3, 5, 8)} fill="#9dbbe5" /><path d="M16 19h8l-4 4z" fill="#222" /></g>,
  python: <g><path d="M6 2h7c2 0 3 1 3 3v5c0 2-1 2-3 2H8c-2 0-3 1-3 3v1H3c-2 0-3-8 0-9h8V6H6z" fill="#3f74ab" /><path d="M17 21h-6c-2 0-3-1-3-3v-4c0-1 1-2 3-2h4c2 0 3-1 3-3V7h2c3 1 3 9 0 10h-7v1h4z" fill="#fbd23e" /><path d="M16 19h8l-4 4z" fill="#222" /></g>,
  clock: <g fill="none" stroke="#777"><circle cx="12" cy="12" r="11" fill="#f4f4f4" strokeWidth="1.700" /><path d="M11.500 4v8.500l4.500 4" strokeWidth="1.800" /></g>,
  report: <g transform="translate(1 0) scale(1.250)"><Page x={2} y={1} /></g>,
  editModel: <g><path d="M2 3h15v12l-4 4v-4H2z" fill="#b9b28e" /><path d="M11 22l2-6 8-10 2 2-8 11z" fill="#aaa" /></g>,
  wrench: <g><path d="M1 6c-1-3 3-6 7-5L6 4l3 4 4-2c1 4-1 7-5 6z" fill="#e3e3e3" stroke="#777" strokeWidth="1.300" /><path d="M9 9l13 13" stroke="#786733" strokeWidth="5.500" /><path d="M10.500 10.500l11 11" stroke="#fbe26a" strokeWidth="3" /></g>,
  search: <g fill="none" stroke="#8a8a8a" strokeWidth="2"><circle cx="10" cy="10" r="8" /><path d="M16 16l7 7" /></g>,
  qgis: <g><circle cx="11.500" cy="11.500" r="8.700" fill="#fff" stroke="#72a92f" strokeWidth="5.200" /><path d="M12 12l10 11" stroke="#fff" strokeWidth="6" /><path d="M13 13l9.500 9.500" stroke="#62993b" strokeWidth="4" /><path d="M9.500 9.500h5l-1.500 4-3.500 1z" fill="#ee7913" /></g>,
  gdal: <g><circle cx="14" cy="12" r="9" fill="#5cb3d5" /><path d="M8 6l6-1 1 5-4 5-4-3zM17 9l5 1-1 5-4-1z" fill="#458a47" /><path d="M1 3l5-1 5-2-2 4-5 2z" fill="#333" /><rect x="0" y="15" width="24" height="9" fill="#fff" /><text x="0" y="23.500" fontSize="9" fontWeight="700" fill="#000">GDAL</text></g>,
  grass: <g><path d="M12 1l10 10-10 11L2 11z" fill="#fff" stroke="#555" strokeWidth="1.500" /><path d="M3 16l9 6.500 9-6.500" fill="none" stroke="#777" strokeWidth="2" /><path d="M12 20c-1-5-3-8-6-9 4 0 5 2 6 5 0-5 0-9 1-12 1 4 0 8 0 12 1-3 2-5 5-6-3 3-4 6-5 10z" fill="#35a535" stroke="#35a535" /></g>,
  layer: <g><path d="M1 1h22v22H1z" fill="#4e93c4" /><path d="M1 1h6v6H1zM13 1h5v6h-5zM7 7h6v5H7zM18 7h5v5h-5zM1 12h6v6H1zM13 12h5v6h-5zM7 18h6v5H7z" fill="#1e4f77" /><path d="M7 1h6v6H7zM13 7h5v5h-5zM1 18h6v5H1z" fill="#86b8da" /></g>,
  extents: <g fill="#fff" stroke="#222" strokeWidth="1.300"><path d="M2 3l5 9M6 2l5 8M10 2l4 7" /><path d="M6 12l6-5 7 4 3 6-7 6-6-3z" /><path d="M9 15l9-5M12 18l8-4M15 21l6-4M3 9l5 6M17 6l5-4M18 8l5-2" fill="none" strokeWidth="1.600" /><circle cx="5" cy="14" r="2.500" fill="#888" /></g>,
  lock: <g><path d="M6.500 11V7c0-6 11-6 11 0v4" fill="none" stroke="#777" strokeWidth="2.200" /><rect x="3" y="10" width="18" height="13" rx="1" fill="#5c5c5c" /></g>,
  crs: <g><ellipse cx="12" cy="12" rx="11.500" ry="10" fill="#777" /><path d="M12 2v20M1 12h22M4 7h16M4 17h16M12 2C6 8 6 16 12 22M12 2c6 6 6 14 0 20" fill="none" stroke="#ddd" strokeWidth=".9" /></g>,
  chat: <g><path d="M8 2h8c10 2 10 14 0 15l5 6-9-6H8C-2 16-2 4 8 2z" fill="#5a5a5a" /><circle cx="7" cy="10" r="1.600" fill="#fff" /><circle cx="12" cy="10" r="1.600" fill="#fff" /><circle cx="17" cy="10" r="1.600" fill="#fff" /></g>,
  app: <g><circle cx="11.500" cy="11.500" r="8.500" fill="#fff" stroke="#f2b12d" strokeWidth="6" /><path d="M12 10l2 9 3-2 5 6 1-3-4-5 2-3z" fill="#2d6b33" /></g>,
  shield: <g><path d="M11 1l10 4c0 9-3 15-10 18C4 20 1 14 1 5z" fill="#d3d0c9" /><circle cx="17" cy="16" r="6.500" fill="#35b44a" /><path d="M14 16l2 2 4-4" fill="none" stroke="#fff" strokeWidth="1.500" /></g>,
  wifi: <path d="M1 7c7-6 15-6 22 0L12 20z" fill="#dfdbd2" />,
  sound: <g fill="none" stroke="#dfdbd2" strokeWidth="2"><path d="M1 8h4l6-6v20l-6-6H1z" fill="#dfdbd2" stroke="none" /><path d="M14 8c2 2 2 6 0 8M17 4c5 4 5 12 0 16" /></g>,
  battery: <g><path d="M4 3h5V1h6v2h5v21H4z" fill="#dfdbd2" /><path d="M13 6l-5 8h4l-1 6 5-8h-4z" fill="#46443d" /></g>,
  min: <path d="M1 18h22v4H1z" fill="#c9ced0" />,
  restore: <path d="M10 3h12v11H10zM3 9v12h13" fill="none" stroke="#c9ced0" strokeWidth="4" />,
  close: <path d="M3 3l18 18M21 3L3 21" stroke="#c9ced0" strokeWidth="4" />,
  dockFloat: <g fill="none" stroke="#555" strokeWidth="2"><rect x="1.500" y="1.500" width="21" height="21" rx="4" /><path d="M10 6h8v8h-8zM6 10h8v8H6z" /></g>,
  dockClose: <g fill="none" stroke="#555"><rect x="1.500" y="1.500" width="21" height="21" rx="4" strokeWidth="2" /><path d="M7 7l10 10M17 7L7 17" strokeWidth="4" /></g>,
};

const Svg = styled.svg<{ $faded?: boolean }>`
  display: block;
  flex: none;
  overflow: visible;
  font-family: ${FONT};
  ${(p) => p.$faded && css`opacity: 0.38; filter: saturate(0.6);`}
`;
const Icon = ({ name, size = 22, faded }: { name: string; size?: number; faded?: boolean }) => (
  <Svg viewBox="0 0 24 24" width={size} height={size} $faded={faded} aria-hidden="true">
    {icons[name]}
  </Svg>
);
const MapSvg = styled.svg`
  display: block;
  width: 100%;
  height: 100%;
`;

/* ---------- window parts ---------- */

const Window = styled.div`
  display: flex;
  flex-direction: column;
  min-height: 100vh;
  white-space: nowrap;
`;
const SystemBar = styled.header`
  display: grid;
  grid-template-columns: 1fr auto 1fr;
  align-items: center;
  height: 27px;
  padding: 0 14px 0 12px;
  background: linear-gradient(#575249, #403e37);
  color: #dfdbd2;
  font-size: 14px;
  font-weight: 700;
`;
const SystemGroup = styled.div<{ $end?: boolean }>`
  display: flex;
  align-items: center;
  gap: ${(p) => (p.$end ? 12 : 20)}px;
  justify-content: ${(p) => (p.$end ? "flex-end" : "flex-start")};
`;
const SystemButton = styled.button<{ $small?: boolean }>`
  display: flex;
  align-items: center;
  gap: 6px;
  ${(p) => p.$small && css`font-size: 12px;`}
`;
const Dot = styled.span`
  width: 8px;
  height: 8px;
  border-radius: 50%;
  background: #dfdbd2;
`;
const Gap = styled.span<{ $width: number }>`
  flex: none;
  width: ${(p) => p.$width}px;
`;
const TitleBar = styled.div`
  display: grid;
  grid-template-columns: 1fr auto 1fr;
  align-items: center;
  height: 26px;
  padding: 0 8px;
  background: #222d32;
  color: #e6e9ea;
`;
const Title = styled.h1`
  grid-column: 2;
  margin: 0;
  font-size: 14px;
  font-weight: 700;
`;
const WindowButtons = styled.div`
  display: flex;
  justify-content: flex-end;
  gap: 15px;
`;
const MenuBar = styled.nav`
  display: flex;
  align-items: center;
  height: 20px;
  padding-left: 4px;
`;
const MenuItem = styled.button`
  padding: 0 7px 0 6px;
  text-underline-offset: 2px;
`;
const Toolbar = styled.div`
  display: flex;
  align-items: center;
  gap: 1px;
  height: 39px;
  padding-left: 5px;
  border-top: 1px solid #b5b1ac;
  background: linear-gradient(#f8f5f1, #efebe7);
`;
const Handle = styled.span<{ $lead?: boolean }>`
  flex: none;
  width: ${(p) => (p.$lead ? 7 : 15)}px;
  height: 16px;
  background: radial-gradient(circle, #aaa6a0 1px, transparent 1px) ${(p) => (p.$lead ? 0 : 7)}px 0 / 3px 3px;
  background-clip: content-box;
  padding-left: ${(p) => (p.$lead ? 0 : 6)}px;
  padding-right: 3px;
`;
const ToolButton = styled.button<{ $pressed?: boolean; $marked?: boolean; $menu?: boolean }>`
  display: flex;
  flex: none;
  align-items: center;
  justify-content: ${(p) => (p.$menu ? "flex-start" : "center")};
  gap: 5px;
  width: ${(p) => (p.$menu ? 44 : 32)}px;
  height: 31px;
  padding-left: ${(p) => (p.$menu ? 5 : 0)}px;
  border-radius: 3px;
  ${(p) => p.$pressed && css`border: 1px solid #a19d98; background: #dcd8d5;`}
  ${(p) => p.$marked && css`svg { outline: 1px solid #2a76d2; background: #e8eef6; }`}
`;
const Caret = styled.span<{ $faded?: boolean; $light?: boolean; $up?: boolean }>`
  flex: none;
  width: 10px;
  height: 5px;
  background: ${(p) => (p.$light ? "#dfdbd2" : "#3c3c3c")};
  clip-path: ${(p) => (p.$up ? "polygon(50% 0, 100% 100%, 0 100%)" : "polygon(0 0, 100% 0, 50% 100%)")};
  opacity: ${(p) => (p.$faded ? 0.35 : 1)};
`;
const Workspace = styled.main`
  display: flex;
  flex: 1;
  border-top: 1px solid #b5b1ac;
`;
const Dock = styled.section<{ $side: "left" | "right" }>`
  display: flex;
  flex: none;
  flex-direction: column;
  width: ${(p) => (p.$side === "left" ? 304 : 360)}px;
`;
const DockHeader = styled.header`
  display: flex;
  align-items: center;
  gap: 3px;
  height: 20px;
  padding: 0 2px 0 4px;
`;
const DockTitle = styled.h2`
  flex: 1;
  margin: 0;
  font-size: 13px;
  font-weight: 400;
`;
const DockTools = styled.div`
  display: flex;
  align-items: center;
  gap: 9px;
  height: 30px;
  padding: 0 8px 2px;
`;
const Divider = styled.span`
  width: 1px;
  height: 12px;
  background: #cbc7c2;
`;
const SmallButton = styled.button`
  display: flex;
  align-items: center;
  gap: 3px;
`;
const Panel = styled.div`
  flex: 1;
  border: 1px solid #b5b1ac;
  background: #fff;
`;
const Splitter = styled.div`
  flex: none;
  width: 6px;
  background: radial-gradient(circle, #bbb7b1 1px, transparent 1px) center / 4px 4px;
  background-clip: content-box;
  padding: 284px 1px;
`;
const MapFrame = styled.section`
  flex: 1;
  min-width: 0;
  border: solid #b5b1ac;
  border-width: 0 1px 1px;
  background: #fff;
`;
const LayerRow = styled.div`
  display: flex;
  align-items: center;
  gap: 7px;
  height: 18px;
  padding: 0 5px;
  background: #308cc6;
  color: #fff;
`;
const LayerName = styled.label`
  overflow: hidden;
  font-weight: 700;
  text-decoration: underline;
  text-underline-offset: 2px;
`;
const Expander = styled.button`
  width: 5px;
  height: 9px;
  margin-right: 6px;
  background: #303030;
  clip-path: polygon(0 0, 100% 50%, 0 100%);
`;
const Tick = styled.input`
  appearance: none;
  flex: none;
  width: 14px;
  height: 14px;
  border: 1px solid #aaa6a1;
  border-radius: 2px;
  background: #fff;
  display: grid;
  place-items: center;
  &:checked::before {
    content: "";
    width: 9px;
    height: 9px;
    background: #000;
    clip-path: polygon(0 50%, 20% 45%, 38% 68%, 80% 0, 100% 0, 45% 100%, 32% 100%);
  }
`;
const SearchField = styled.label<{ $status?: boolean }>`
  display: flex;
  align-items: center;
  gap: 8px;
  height: 24px;
  padding: 0 8px;
  border: 1px solid #a9a5a0;
  border-radius: 3px;
  background: #fff;
  ${(p) => p.$status && css`width: 356px; flex: 0 1 auto;`}
`;
const SearchInput = styled.input`
  flex: 1;
  min-width: 0;
  padding: 0;
  border: 0;
  outline: 0;
  background: none;
  &::placeholder { color: #7b7b7b; opacity: 1; }
`;
const TreeRow = styled.li`
  display: flex;
  align-items: center;
  gap: 6px;
  height: 18px;
  padding-left: 7px;
`;
const StatusBar = styled.footer`
  display: flex;
  align-items: center;
  gap: 4px;
  height: 31px;
  padding: 0 6px 0 4px;
`;
const StatusSpace = styled.span`
  flex: 1;
`;
const ClippedLabel = styled.label<{ $width: number }>`
  display: flex;
  flex: none;
  justify-content: center;
  overflow: hidden;
  width: ${(p) => p.$width}px;
`;
const ValueBox = styled.div<{ $width: number }>`
  position: relative;
  display: flex;
  flex: none;
  width: ${(p) => p.$width}px;
  height: 24px;
  overflow: hidden;
  border: 1px solid #a9a5a0;
  border-radius: 3px;
  background: #fff;
`;
const ValueInput = styled.input`
  flex: 1;
  min-width: 0;
  padding: 0 5px;
  border: 0;
  outline: 0;
  background: none;
`;
const ScaleSelect = styled.select`
  appearance: none;
  width: 100%;
  padding: 0 1px;
  border: 0;
  outline: 0;
  background:
    linear-gradient(#b5b1ac, #b5b1ac) right 19px top / 1px 100% no-repeat,
    linear-gradient(#fafafa, #ebe8e4) right top / 19px 100% no-repeat;
`;
const ScaleArrow = styled(Caret)`
  position: absolute;
  right: 5px;
  top: 9px;
  width: 9px;
  pointer-events: none;
`;
const Stepper = styled.div`
  display: flex;
  flex-direction: column;
  width: 14px;
  border-left: 1px solid #b5b1ac;
  background: linear-gradient(#fafafa, #ebe8e4);
`;
const StepButton = styled.button`
  display: grid;
  flex: 1;
  place-items: center;
  ${Caret} { width: 8px; height: 4px; background: #555; }
`;
const TickLabel = styled.label`
  display: flex;
  align-items: center;
  gap: 5px;
  margin: 0 10px 0 2px;
`;
const StatusButton = styled.button`
  display: flex;
  align-items: center;
  gap: 5px;
  margin-right: 16px;
`;

/* A tool is "icon", with "*" for disabled, "!" for pressed, "#" for highlighted and ":v" for a menu arrow. */
const fileTools = "| new open save layoutNew layouts style | hand! panSel zoomIn zoomOut zoomFull zoomSel* zoomLayer zoomNative zoomLast zoomNext* mapNew markNew marks refresh | info action*:v select*:v form*:v deselect table* abacus* gear! sigma measure:v tip note:v";
const editTools = "| vector raster mesh comma feather virtual postgis:v wms:v wcs wfs:v featherNew:v | tag* pie* tagPin# tagPinOff* tagEye* tagMove* tagTurn* tagEdit* | | pencils* pencil* saveEdit* points* vertex*:v attrs* trash* cut* copy* paste* undo* redo*";

const Tools = ({ list, label }: { list: string; label: string }) => (
  <Toolbar role="toolbar" aria-label={label}>
    {list.split(" ").map((t, i) => {
      if (t === "|") return <Handle key={i} $lead={i === 0} />;
      const name = t.replace(/[^a-zA-Z].*$/, "");
      const faded = t.includes("*");
      const menu = t.endsWith(":v");
      return (
        <ToolButton key={i} aria-label={name} disabled={faded} $menu={menu} $pressed={t.includes("!")} $marked={t.includes("#")}>
          <Icon name={name} faded={faded} />
          {menu && <Caret $faded={faded} />}
        </ToolButton>
      );
    })}
  </Toolbar>
);

const menus = ["Pro_yecto", "_Edición", "_Ver", "_Capa", "Con_figuración", "Co_mplementos", "Vect_orial", "_Ráster", "_Web", "_Malla", "Pro_cesos", "A_yuda"];
const toolbox: [string, string][] = [
  ["clock", "Usado recientemente"],
  ...["Análisis de redes", "Análisis de vector", "Análisis del terreno ráster", "Análisis ráster", "Base de datos", "Cartografía", "Creación de vectores", "Geometría vectorial", "Gráficos", "Herramientas de archivo", "Herramientas de capa", "Herramientas ráster", "Interpolación", "Selección vectorial", "Superposición vectorial", "Tabla vectorial", "Vector general"].map((n) => ["qgis", n] as [string, string]),
  ["gdal", "GDAL"],
  ["grass", "GRASS"],
];

const DockTop = ({ title }: { title: string }) => (
  <DockHeader>
    <DockTitle>{title}</DockTitle>
    <button aria-label="Desacoplar"><Icon name="dockFloat" size={11} /></button>
    <button aria-label="Cerrar panel"><Icon name="dockClose" size={11} /></button>
  </DockHeader>
);
const Steps = () => (
  <Stepper>
    <StepButton aria-label="Aumentar"><Caret $up /></StepButton>
    <StepButton aria-label="Disminuir"><Caret /></StepButton>
  </Stepper>
);

export default function App() {
  return (
    <Window>
      <GlobalStyle />
      <SystemBar>
        <SystemGroup>
          <button>Actividades</button>
          <SystemButton><Icon name="app" size={16} />QGIS Desktop<Caret $light /></SystemButton>
        </SystemGroup>
        <SystemButton>sáb, 20 de jul, 16:26<Dot /></SystemButton>
        <SystemGroup $end>
          <Icon name="shield" size={20} />
          <Gap $width={8} />
          <Icon name="wifi" size={16} />
          <Icon name="sound" size={16} />
          <SystemButton $small><Icon name="battery" size={14} />72 %<Caret $light /></SystemButton>
        </SystemGroup>
      </SystemBar>
      <TitleBar>
        <Title>*Proyecto sin título - QGIS [GeographyTeam]</Title>
        <WindowButtons>
          <button aria-label="Minimizar"><Icon name="min" size={11} /></button>
          <button aria-label="Restaurar"><Icon name="restore" size={11} /></button>
          <button aria-label="Cerrar"><Icon name="close" size={11} /></button>
        </WindowButtons>
      </TitleBar>
      <MenuBar>
        {menus.map((m) => {
          const [a, b] = m.split("_");
          return <MenuItem key={m}>{a}<u>{b[0]}</u>{b.slice(1)}</MenuItem>;
        })}
      </MenuBar>
      <Tools list={fileTools} label="Proyecto y navegación" />
      <Tools list={editTools} label="Capas y edición" />
      <Workspace>
        <Dock $side="left">
          <DockTop title="Capas" />
          <DockTools>
            {["brush", "group", "eye", "filter"].map((n) => <SmallButton key={n} aria-label={n}><Icon name={n} size={16} /></SmallButton>)}
            <SmallButton aria-label="epsilon" disabled><Icon name="epsilon" size={16} faded /><Caret $faded /></SmallButton>
            {["expand", "collapse", "remove"].map((n) => <SmallButton key={n} aria-label={n}><Icon name={n} size={16} /></SmallButton>)}
          </DockTools>
          <Panel>
            <LayerRow>
              <Expander aria-label="Desplegar capa" />
              <Tick type="checkbox" id="layer" defaultChecked />
              <Icon name="layer" size={14} />
              <LayerName htmlFor="layer">HDF4_EOS:EOS_GRID:"MCD12Q1.A...</LayerName>
            </LayerRow>
          </Panel>
        </Dock>
        <Splitter />
        <MapFrame><MapCanvas /></MapFrame>
        <Splitter />
        <Dock $side="right">
          <DockTop title="Caja de herramientas de Procesos" />
          <DockTools>
            {["gears", "python", "clock", "report"].map((n) => <SmallButton key={n} aria-label={n}><Icon name={n} size={16} /></SmallButton>)}
            <Divider />
            <SmallButton aria-label="editModel" disabled><Icon name="editModel" size={16} faded /></SmallButton>
            <Divider />
            <SmallButton aria-label="wrench"><Icon name="wrench" size={16} /></SmallButton>
          </DockTools>
          <SearchField>
            <Icon name="search" size={12} />
            <SearchInput placeholder="Buscar..." aria-label="Buscar" />
          </SearchField>
          <Panel as="ul">
            {toolbox.map(([icon, name]) => (
              <TreeRow key={name}>
                <Expander aria-label={"Desplegar " + name} />
                <Icon name={icon} size={15} />
                {name}
              </TreeRow>
            ))}
          </Panel>
        </Dock>
      </Workspace>
      <StatusBar>
        <SearchField $status>
          <Icon name="search" size={12} />
          <SearchInput placeholder="Escriba para localizar (Ctrl+K)" aria-label="Localizar" />
        </SearchField>
        <StatusSpace />
        <ClippedLabel htmlFor="coord" $width={58}>Coordenada</ClippedLabel>
        <ValueBox $width={130}><ValueInput id="coord" defaultValue="-8239496,-1529743" /></ValueBox>
        <button aria-label="Extensión"><Icon name="extents" size={16} /></button>
        <Gap $width={5} />
        <ClippedLabel htmlFor="scale" $width={24}>Escala</ClippedLabel>
        <ValueBox $width={88}>
          <ScaleSelect id="scale"><option>1:3784545</option></ScaleSelect>
          <ScaleArrow />
        </ValueBox>
        <Gap $width={3} />
        <button aria-label="Bloquear escala"><Icon name="lock" size={15} /></button>
        <ClippedLabel htmlFor="zoom" $width={64}>Amplificador</ClippedLabel>
        <ValueBox $width={98}><ValueInput id="zoom" defaultValue="100%" /><Steps /></ValueBox>
        <Gap $width={0} />
        <ClippedLabel htmlFor="turn" $width={42}>Rotación</ClippedLabel>
        <Gap $width={0} />
        <ValueBox $width={94}><ValueInput id="turn" defaultValue="0.0 °" /><Steps /></ValueBox>
        <TickLabel><Tick type="checkbox" defaultChecked />Representar</TickLabel>
        <StatusButton><Icon name="crs" size={15} />USER:100025</StatusButton>
        <button aria-label="Mensajes"><Icon name="chat" size={16} /></button>
      </StatusBar>
    </Window>
  );
}
